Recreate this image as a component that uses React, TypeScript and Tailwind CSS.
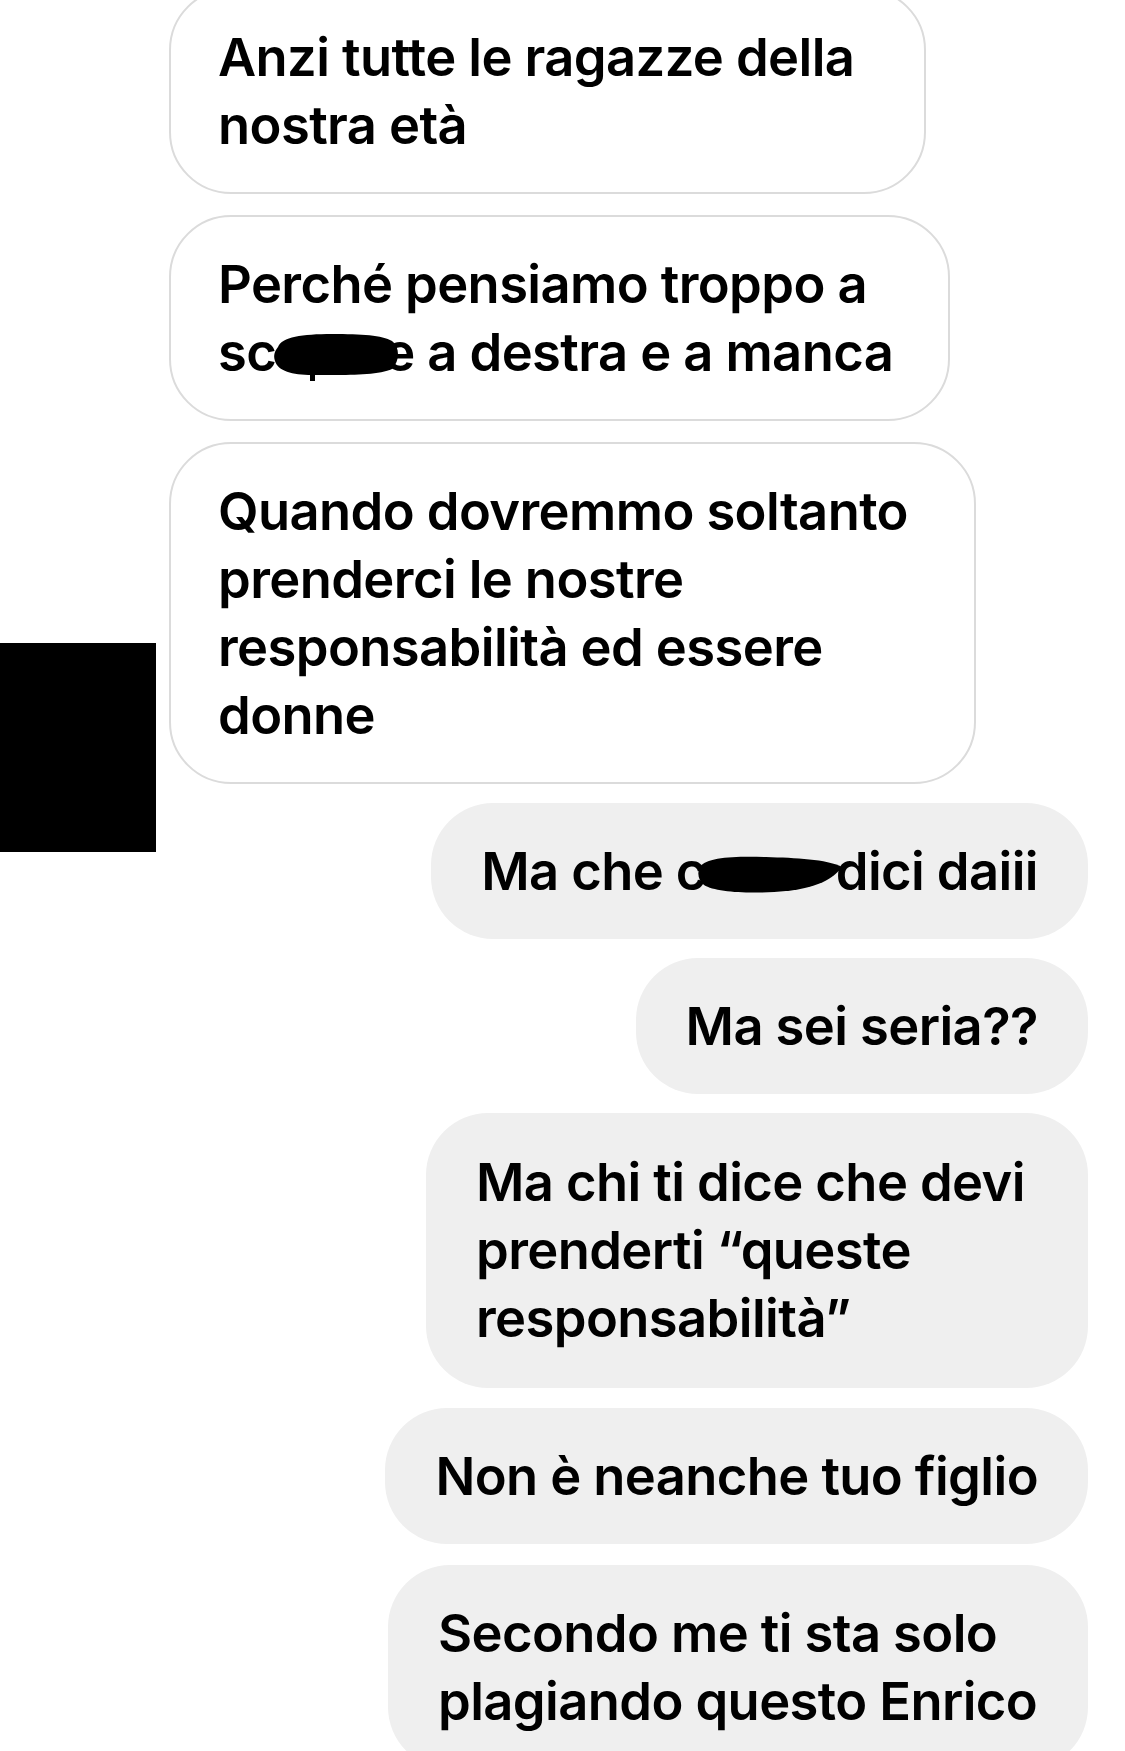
import React from 'react';

const CazzoBlob: React.FC = () => (
  <svg
    className="inline-block align-middle -ml-[10px] -mr-[10px] -mt-[4px]"
    width="150"
    height="42"
    viewBox="0 0 150 42"
  >
    <path
      d="M4 14 C10 4 40 3 70 4 C100 5 130 6 146 14 C140 22 128 34 90 38 C60 41 20 40 8 32 C2 27 1 20 4 14 Z"
      fill="#000"
    />
  </svg>
);

const ScopareBlob: React.FC = () => (
  <svg
    className="inline-block align-middle -ml-[4px] -mr-[16px] -mt-[2px]"
    width="128"
    height="50"
    viewBox="0 0 128 50"
  >
    <path
      d="M6 16 C10 6 30 3 60 3 C90 3 110 4 120 10 C128 16 128 30 120 38 C105 45 70 44 40 44 C20 44 6 40 3 30 C1 24 3 20 6 16 Z"
      fill="#000"
    />
    <rect x="38" y="40" width="5" height="10" fill="#000" />
  </svg>
);

const Received: React.FC<{ children: React.ReactNode; className?: string }> = ({ children, className }) => (
  <div className={`ml-[169px] self-start rounded-[62px] border-2 border-[#dbdbdb] bg-white px-[47px] py-[33px] whitespace-nowrap ${className ?? ''}`}>
    {children}
  </div>
);

const Sent: React.FC<{ children: React.ReactNode; className?: string }> = ({ children, className }) => (
  <div className={`mr-[37px] self-end rounded-[62px] bg-[#efefef] px-[50px] py-[34px] whitespace-nowrap ${className ?? ''}`}>
    {children}
  </div>
);

const App: React.FC = () => {
  return (
    <div
      className="relative h-[1751px] w-[1125px] overflow-hidden bg-white text-black"
      style={{ fontFamily: 'Inter, "Noto Sans", sans-serif' }}
    >
      <div className="-mt-[12px] flex flex-col gap-[19px] text-[52.5px] font-semibold leading-[68px] tracking-[-0.6px]">
        {/* messaggi ricevuti */}
        <Received className="w-[757px]">
          Anzi tutte le ragazze della
          <br />
          nostra età
        </Received>
        <Received className="mt-[2px] w-[781px]">
          Perché pensiamo troppo a
          <br />
          sc<ScopareBlob />e a destra e a manca
        </Received>
        <div className="relative mt-[2px] self-start">
          <Received className="w-[807px]">
            Quando dovremmo soltanto
            <br />
            prenderci le nostre
            <br />
            responsabilità ed essere
            <br />
            donne
          </Received>
          {/* avatar coperto */}
          <div className="absolute left-0 top-[201px] h-[209px] w-[156px] bg-black" />
        </div>

        {/* messaggi inviati */}
        <Sent>
          Ma che c<CazzoBlob />dici daiii
        </Sent>
        <Sent>Ma sei seria??</Sent>
        <Sent className="w-[662px] pt-[35px] pb-[36px]">
          Ma chi ti dice che devi
          <br />
          prenderti “queste
          <br />
          responsabilità”
        </Sent>
        <Sent className="mt-[1px]">Non è neanche tuo figlio</Sent>
        <Sent className="mt-[2px] w-[700px]">
          Secondo me ti sta solo
          <br />
          plagiando questo Enrico
        </Sent>
      </div>
    </div>
  );
};

export default App;
